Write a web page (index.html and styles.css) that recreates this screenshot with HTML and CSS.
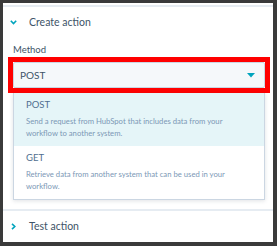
FILE: index.html
```html
<!DOCTYPE html>
<html>
<head>
<meta charset="utf-8">
<link rel="stylesheet" href="styles.css">
</head>
<body>
<div class="frame">
  <div class="rule"></div>
  <div class="section-head">
    <svg class="chev" width="7" height="5" viewBox="0 0 7 5"><path d="M0.8 0.8 L3.5 3.6 L6.2 0.8" fill="none" stroke="#00a4bd" stroke-width="1.6"/></svg>
    <span class="title">Create action</span>
  </div>
  <div class="content">
    <div class="label">Method</div>
    <div class="highlight">
      <div class="select">
        <span class="value">POST</span>
        <svg class="caret" width="8" height="5" viewBox="0 0 8 5"><path d="M0 0 H8 L4 4.5 Z" fill="#00a4bd"/></svg>
      </div>
    </div>
    <div class="menu">
      <div class="option active">
        <div class="opt-label">POST</div>
        <div class="opt-desc">Send a request from HubSpot that includes data from your workflow to another system.</div>
      </div>
      <div class="option">
        <div class="opt-label">GET</div>
        <div class="opt-desc">Retrieve data from another system that can be used in your workflow.</div>
      </div>
    </div>
  </div>
  <div class="rule sep"></div>
  <div class="section-head">
    <svg class="chev" width="7" height="7" viewBox="0 0 7 7"><path d="M2 0.8 L4.8 3.5 L2 6.2" fill="none" stroke="#00a4bd" stroke-width="1.6"/></svg>
    <span class="title">Test action</span>
  </div>
</div>
</body>
</html>
```

FILE: styles.css
```css
html, body {
  margin: 0;
  padding: 0;
}
body {
  background: #3a3a3a;
  width: 277px;
  height: 246px;
  overflow: hidden;
  font-family: Lato, "Noto Sans", sans-serif;
  color: #33475b;
}
.frame {
  margin: 3px 4px 4px 3px;
  height: 239px;
  background: #fff;
  overflow: hidden;
}
.rule {
  height: 2px;
  margin-top: 2px;
  background: #e6ecf2;
}
.sep {
  margin-top: 9px;
}
.section-head {
  height: 30px;
  display: flex;
  align-items: center;
  padding-left: 7px;
}
.chev {
  width: 7px;
  margin-right: 12px;
}
.title {
  font-size: 10.5px;
  color: #3e5468;
}
.content {
  padding: 7px 0 0 5px;
}
.label {
  font-size: 9.5px;
  line-height: 12px;
  padding-left: 5px;
  margin-bottom: 1px;
  color: #3e5468;
}
.highlight {
  width: 252px;
  border: 5px solid #ff0000;
}
.select {
  height: 24px;
  border: 1px solid #cbd6e2;
  border-radius: 2px;
  background: #f5f8fa;
  display: flex;
  align-items: center;
  justify-content: space-between;
  padding: 0 9px 0 6px;
}
.value {
  font-size: 10px;
  color: #3e5468;
}
.caret {
  display: block;
}
.menu {
  width: 250px;
  margin-left: 5px;
  border: 1px solid #cbd6e2;
  border-top: none;
  background: #fff;
  box-shadow: 0 1px 4px rgba(45, 62, 80, 0.15);
}
.option {
  padding: 6px 12px 7px;
}
.option.active {
  background: #e5f5f8;
}
.opt-label {
  font-size: 9.5px;
  line-height: 12px;
  color: #516f90;
  margin-bottom: 4px;
}
.opt-desc {
  font-size: 7.7px;
  line-height: 12px;
  color: #7c98b6;
}
```
